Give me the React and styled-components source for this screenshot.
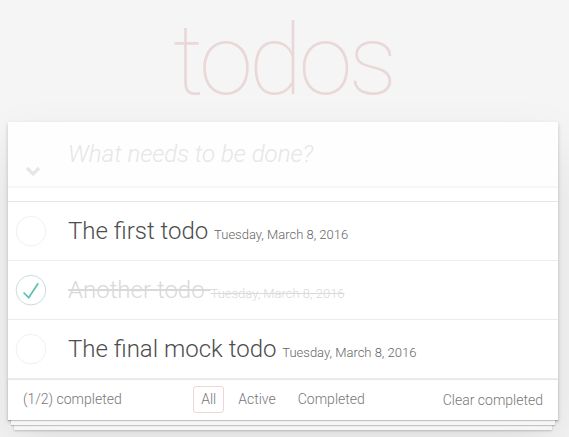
import React from 'react'
import styled, { createGlobalStyle } from 'styled-components';

const GlobalStyle = createGlobalStyle`
  html, body {
    margin: 0;
    padding: 0;
  }
  body {
    background: #f5f5f5;
    font-family: Roboto, "Liberation Sans", sans-serif;
    font-weight: 300;
    font-size: 14px;
    line-height: 1.4em;
    color: #4d4d4d;
  }
`;

const Page = styled.div`
  padding: 0 11px 20px 8px;
`;

const Title = styled.h1`
  margin: 0 0 11px;
  padding-top: 11px;
  width: 550px;
  text-align: center;
  font-size: 98px;
  line-height: 100px;
  font-weight: 100;
  letter-spacing: -4px;
  color: rgba(175, 47, 47, 0.15);
`;

const Card = styled.section`
  position: relative;
  width: 550px;
  background: #fff;
  box-shadow: 0 2px 4px 0 rgba(0, 0, 0, 0.2), 0 25px 50px 0 rgba(0, 0, 0, 0.1);
`;

const Header = styled.header`
  position: relative;
`;

const NewTodo = styled.input`
  display: block;
  box-sizing: border-box;
  width: 100%;
  margin: 0;
  padding: 16px 16px 16px 60px;
  border: none;
  outline: none;
  background: rgba(0, 0, 0, 0.003);
  box-shadow: inset 0 -2px 1px rgba(0, 0, 0, 0.03);
  font-family: inherit;
  font-weight: 300;
  font-size: 24px;
  line-height: 1.4em;
  color: #4d4d4d;
  &::placeholder {
    font-style: italic;
    font-weight: 300;
    color: #e6e6e6;
  }
`;

const ToggleAll = styled.span`
  position: absolute;
  left: 17px;
  top: 41px;
  display: block;
  width: 16px;
  height: 11px;
`;

const Spacer = styled.div`
  height: 13px;
`;

const List = styled.ul`
  margin: 0;
  padding: 0;
  list-style: none;
  border-top: 1px solid #e6e6e6;
`;

const Item = styled.li`
  display: flex;
  align-items: center;
  border-bottom: 1px solid #ededed;
  font-size: 24px;
`;

const Toggle = styled.span`
  flex: none;
  display: block;
  width: 40px;
  height: 40px;
`;

const Label = styled.label`
  display: block;
  padding: 15px 60px 15px 20px;
  line-height: 28px;
  white-space: pre;
`;

const Text = styled.span`
  color: ${p => (p.$done ? '#d9d9d9' : '#4d4d4d')};
  text-decoration: ${p => (p.$done ? 'line-through' : 'none')};
`;

const Stamp = styled.span`
  font-size: 13px;
  line-height: 1;
  color: ${p => (p.$done ? '#d9d9d9' : '#666')};
  text-decoration: ${p => (p.$done ? 'line-through' : 'none')};
`;

const Footer = styled.footer`
  display: grid;
  grid-template-columns: 1fr auto 1fr;
  grid-template-rows: 20px;
  align-items: center;
  height: 20px;
  padding: 10px 15px;
  color: #777;
  border-top: 1px solid #e6e6e6;
  box-shadow: 0 1px 1px rgba(0, 0, 0, 0.2), 0 8px 0 -3px #f6f6f6,
    0 9px 1px -3px rgba(0, 0, 0, 0.2), 0 16px 0 -6px #f6f6f6,
    0 17px 2px -6px rgba(0, 0, 0, 0.2);
`;

const Count = styled.span`
  justify-self: start;
`;

const Filters = styled.ul`
  display: flex;
  margin: 0;
  padding: 0;
  list-style: none;
`;

const FilterLink = styled.a`
  display: block;
  margin: 3px;
  padding: 3px 7px;
  border: 1px solid ${p => (p.$selected ? 'rgba(175, 47, 47, 0.2)' : 'transparent')};
  border-radius: 3px;
  color: inherit;
  text-decoration: none;
`;

const Clear = styled.button`
  justify-self: end;
  margin: 0;
  padding: 0;
  border: none;
  background: none;
  font: inherit;
  line-height: 20px;
  color: inherit;
`;

function Check({ done }) {
  return (
    <svg width="40" height="40" viewBox="-10 -18 100 135">
      <circle cx="50" cy="50" r="50" fill="none" stroke={done ? '#bddad5' : '#ededed'} strokeWidth="3" />
      {done && <path fill="#5dc2af" d="M72 25L42 71 27 56l-4 4 20 20 34-52z" />}
    </svg>
  );
}

const todos = [
  { text: 'The first todo', date: 'Tuesday, March 8, 2016', done: false },
  { text: 'Another todo', date: 'Tuesday, March 8, 2016', done: true },
  { text: 'The final mock todo', date: 'Tuesday, March 8, 2016', done: false },
];

export default function App() {
  return (
    <Page>
      <GlobalStyle />
      <Title>todos</Title>
      <Card>
        <Header>
          <NewTodo placeholder="What needs to be done?" />
          <ToggleAll>
            <svg width="16" height="11" viewBox="0 0 16 11">
              <polyline points="2,2 8,8 14,2" fill="none" stroke="#e6e6e6" strokeWidth="3.2" />
            </svg>
          </ToggleAll>
        </Header>
        <Spacer />
        <List>
          {todos.map(t => (
            <Item key={t.text}>
              <Toggle><Check done={t.done} /></Toggle>
              <Label>
                <Text $done={t.done}>{t.text + ' '}</Text>
                <Stamp $done={t.done}>{t.date}</Stamp>
              </Label>
            </Item>
          ))}
        </List>
        <Footer>
          <Count>(1/2) completed</Count>
          <Filters>
            <li><FilterLink href="#/" $selected>All</FilterLink></li>
            <li><FilterLink href="#/active">Active</FilterLink></li>
            <li><FilterLink href="#/completed">Completed</FilterLink></li>
          </Filters>
          <Clear>Clear completed</Clear>
        </Footer>
      </Card>
    </Page>
  );
}
